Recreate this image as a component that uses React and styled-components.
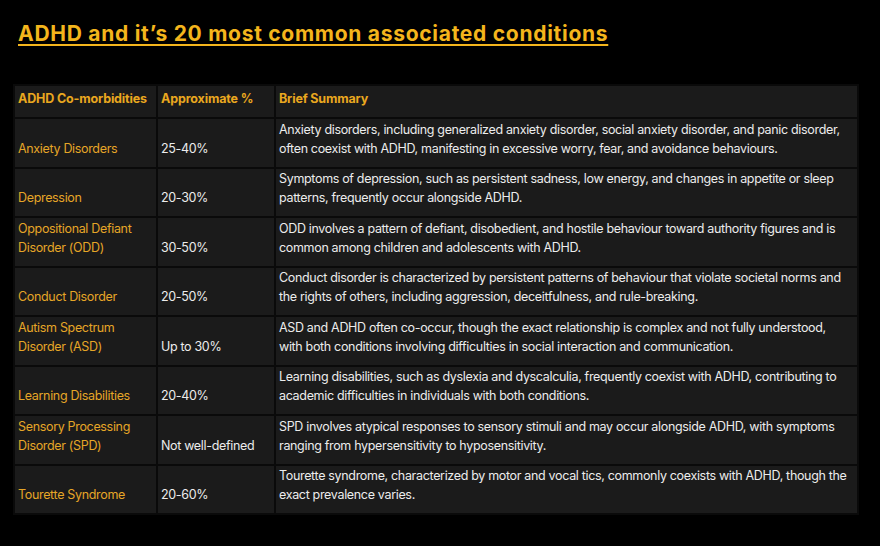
import styled, { createGlobalStyle } from "styled-components";

const GlobalStyle = createGlobalStyle`
  html, body {
    margin: 0;
    padding: 0;
    background: #000;
  }
  body {
    font-family: Inter, "Noto Sans", sans-serif;
  }
`;

const rows = [
  {
    name: "Anxiety Disorders",
    pct: "25-40%",
    text: "Anxiety disorders, including generalized anxiety disorder, social anxiety disorder, and panic disorder, often coexist with ADHD, manifesting in excessive worry, fear, and avoidance behaviours."
  },
  {
    name: "Depression",
    pct: "20-30%",
    text: "Symptoms of depression, such as persistent sadness, low energy, and changes in appetite or sleep patterns, frequently occur alongside ADHD."
  },
  {
    name: "Oppositional Defiant Disorder (ODD)",
    pct: "30-50%",
    text: "ODD involves a pattern of defiant, disobedient, and hostile behaviour toward authority figures and is common among children and adolescents with ADHD."
  },
  {
    name: "Conduct Disorder",
    pct: "20-50%",
    text: "Conduct disorder is characterized by persistent patterns of behaviour that violate societal norms and the rights of others, including aggression, deceitfulness, and rule-breaking."
  },
  {
    name: "Autism Spectrum Disorder (ASD)",
    pct: "Up to 30%",
    text: "ASD and ADHD often co-occur, though the exact relationship is complex and not fully understood, with both conditions involving difficulties in social interaction and communication."
  },
  {
    name: "Learning Disabilities",
    pct: "20-40%",
    text: "Learning disabilities, such as dyslexia and dyscalculia, frequently coexist with ADHD, contributing to academic difficulties in individuals with both conditions."
  },
  {
    name: "Sensory Processing Disorder (SPD)",
    pct: "Not well-defined",
    text: "SPD involves atypical responses to sensory stimuli and may occur alongside ADHD, with symptoms ranging from hypersensitivity to hyposensitivity."
  },
  {
    name: "Tourette Syndrome",
    pct: "20-60%",
    text: "Tourette syndrome, characterized by motor and vocal tics, commonly coexists with ADHD, though the exact prevalence varies."
  }
];

const App = () => {
  return <Page>
    <GlobalStyle />
    <Title>ADHD and it’s 20 most common associated conditions</Title>
    <Table>
      <colgroup>
        <col style={{ width: 141 }} />
        <col style={{ width: 116 }} />
        <col />
      </colgroup>
      <thead>
        <tr>
          <Head>ADHD Co-morbidities</Head>
          <Head>Approximate %</Head>
          <Head>Brief Summary</Head>
        </tr>
      </thead>
      <tbody>
        {rows.map(r => (
          <Row key={r.name}>
            <Cell accent>{r.name}</Cell>
            <Cell>{r.pct}</Cell>
            <Cell>{r.text}</Cell>
          </Row>
        ))}
      </tbody>
    </Table>
  </Page>
}

export default App;

const Page = styled.div`
  width: 880px;
  height: 546px;
  background: #000;
  padding: 21px 0 0 13px;
  box-sizing: border-box;
  overflow: hidden;
`

const Title = styled.h1`
  margin: 0 0 0 5px;
  font-size: 21px;
  line-height: 26px;
  font-weight: 700;
  color: #f4b51c;
  text-decoration: underline;
  text-decoration-thickness: 1.5px;
  text-underline-offset: 3px;
  letter-spacing: 0.72px;
`

const Table = styled.table`
  margin-top: 37px;
  width: 846px;
  table-layout: fixed;
  border-collapse: separate;
  border-spacing: 2px;
  background: #0a0a0a;
`

const Head = styled.th`
  height: 31px;
  padding: 0 4px 9px 3px;
  box-sizing: border-box;
  vertical-align: bottom;
  text-align: left;
  background: #1b1b1b;
  color: #eaa81f;
  font-size: 12.5px;
  line-height: 19px;
  font-weight: 700;
  letter-spacing: -0.15px;
`

const Row = styled.tr`
  height: 47.5px;
`

const Cell = styled.td`
  padding: 0 5px 9px 3px;
  vertical-align: bottom;
  background: #1b1b1b;
  color: ${props => props.accent ? "#e6a627" : "#ececec"};
  font-size: 12.5px;
  line-height: 19px;
  letter-spacing: -0.33px;
`
